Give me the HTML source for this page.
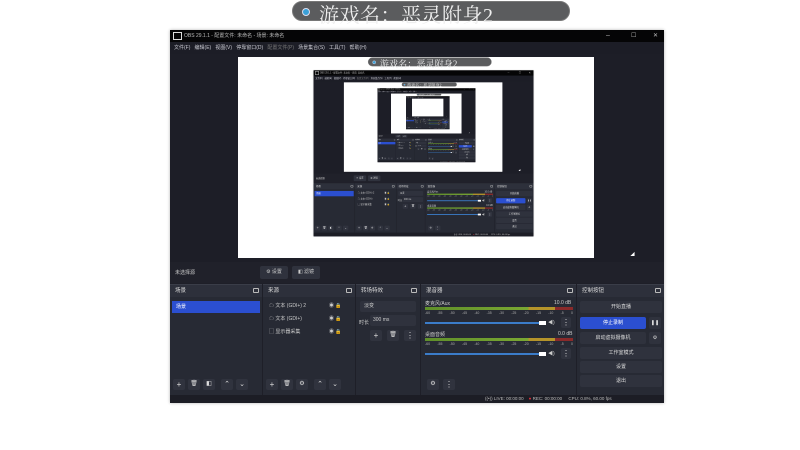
<!DOCTYPE html>
<html><head><meta charset="utf-8">
<style>
*{margin:0;padding:0;box-sizing:border-box}
html,body{width:800px;height:450px;overflow:hidden;background:#fff}
.root{position:absolute;left:0;top:0;width:800px;height:450px;background:#fff;overflow:hidden;font-family:"Liberation Sans","Noto Sans CJK SC",sans-serif}
.a{position:absolute}
.pill{left:292px;top:1px;width:278px;height:20px;border-radius:10px;background:#5b5c5e;border:1px solid #777}
.pill .t{left:26px;top:-3px;font-family:"Liberation Serif","Noto Serif CJK SC",serif;font-size:20px;color:#eee;white-space:nowrap;letter-spacing:0.5px}
.pill .dot{left:9px;top:6px;width:8px;height:8px;border-radius:50%;background:#3aa0d8;border:1px solid #dde}
.win{left:170px;top:30px;width:494px;height:373px;background:#1e1f28;box-shadow:0 0 3px rgba(0,0,0,.3)}
.tb{left:0;top:0;width:494px;height:12px;background:#050506;color:#bbb;font-size:5px;line-height:12px}
.mb{left:0;top:12px;width:494px;height:12px;background:#1c1d26;color:#c8c8d0;font-size:5px;line-height:12px;white-space:nowrap}
.pv{left:0;top:24px;width:494px;height:208px;background:#1d1e27}
.canvas{left:68px;top:3px;width:356px;height:201px;background:#fff;overflow:hidden}
.stb{left:0;top:232px;width:494px;height:21px;background:#20212a;color:#ccc;font-size:5px}
.btn{background:#2f323d;border-radius:2px;color:#ccc;font-size:5px;text-align:center}
.dock{top:254px;height:111px;background:#272a34;border-top:1px solid #3a3d48}
.dh{left:0;top:0;right:0;height:12px;background:#2d303b;color:#ddd;font-size:5.5px;line-height:12px;padding-left:5px}
.dh i{position:absolute;right:3px;top:3px;width:6px;height:5px;border:1px solid #bbb;border-radius:1px}
.st{left:0;top:365px;width:494px;height:8px;background:#1c1d25;color:#bbb;font-size:4.5px;line-height:8px}
.ib{width:12px;height:11px;border-radius:2px;background:#30333e;color:#ddd;font-size:8px;line-height:11px;text-align:center}
.meter{height:3px;background:linear-gradient(90deg,#5f8f2a 0,#7aa832 70%,#b5942a 70%,#b5942a 88%,#8a2a2a 88%)}
.vol{height:2px;background:#3b7cc9}
.cb{left:3px;width:82px;height:12px;background:#2f323d;border-radius:2px;color:#ddd;font-size:5px;line-height:12px;text-align:center}
.lbl{color:#ccc;font-size:5px;white-space:nowrap}
.ticks{width:148px;overflow:hidden;display:flex;justify-content:space-between;font-size:3.5px;color:#aaa}
</style></head><body>
<div class="root" id="r0">
  <div class="a pill"><div class="a dot"></div><div class="a t">游戏名：恶灵附身2</div></div>
  <div class="a win">
    <div class="a tb"><span style="position:absolute;left:3px;top:2px;width:9px;height:8px;border:1px solid #ddd"></span><span style="position:absolute;left:14px">OBS 29.1.1 - 配置文件: 未命名 - 场景: 未命名</span><span style="position:absolute;left:436px;font-size:7px">–</span><span style="position:absolute;left:461px;font-size:6px">☐</span><span style="position:absolute;left:483px;font-size:6px">✕</span></div>
    <div class="a mb"><span style="margin-left:4px">文件(F)&nbsp;&nbsp; 编辑(E)&nbsp;&nbsp; 视图(V)&nbsp;&nbsp; 停靠窗口(D)&nbsp;&nbsp; <span style="color:#777">配置文件(P)</span>&nbsp;&nbsp; 场景集合(S)&nbsp;&nbsp; 工具(T)&nbsp;&nbsp; 帮助(H)</span></div>
    <div class="a pv">
      <div class="a canvas"></div>
      <div class="a" style="left:462px;top:198px;width:0;height:0;border-left:3px solid #fff;border-bottom:3px solid transparent;border-top:3px solid transparent;transform:rotate(45deg)"></div>
    </div>
    <div class="a stb">
      <span class="a lbl" style="left:5px;top:7px">未选择源</span>
      <div class="a btn" style="left:90px;top:4px;width:28px;height:13px;line-height:13px">⚙ 设置</div>
      <div class="a btn" style="left:122px;top:4px;width:28px;height:13px;line-height:13px">◧ 滤镜</div>
    </div>
    <div class="a dock" style="left:0;width:92px">
      <div class="a dh">场景<i></i></div>
      <div class="a" style="left:2px;top:16px;width:88px;height:12px;background:#2b4fd0;color:#fff;font-size:5px;line-height:12px;padding-left:4px">场景</div>
      <div class="a ib" style="left:3px;top:94px">+</div><div class="a ib" style="left:18px;top:94px;font-size:6px">🗑</div><div class="a ib" style="left:33px;top:94px;font-size:6px">◧</div><div class="a ib" style="left:51px;top:94px;font-size:7px">⌃</div><div class="a ib" style="left:66px;top:94px;font-size:7px">⌄</div>
    </div>
    <div class="a dock" style="left:93px;width:92px">
      <div class="a dh">来源<i></i></div>
      <div class="a lbl" style="left:6px;top:17px">☁ 文本 (GDI+) 2</div>
      <div class="a lbl" style="left:6px;top:30px">☁ 文本 (GDI+)</div>
      <div class="a lbl" style="left:6px;top:43px">▢ 显示器采集</div>
      <div class="a lbl" style="left:66px;top:17px">◉ 🔒</div><div class="a lbl" style="left:66px;top:30px">◉ 🔒</div><div class="a lbl" style="left:66px;top:43px">◉ 🔒</div>
      <div class="a ib" style="left:3px;top:94px">+</div><div class="a ib" style="left:18px;top:94px;font-size:6px">🗑</div><div class="a ib" style="left:33px;top:94px;font-size:6px">⚙</div><div class="a ib" style="left:51px;top:94px;font-size:7px">⌃</div><div class="a ib" style="left:66px;top:94px;font-size:7px">⌄</div>
    </div>
    <div class="a dock" style="left:186px;width:64px">
      <div class="a dh">转场特效<i></i></div>
      <div class="a btn" style="left:4px;top:16px;width:56px;height:11px;line-height:11px;text-align:left;padding-left:4px">淡变</div>
      <span class="a lbl" style="left:3px;top:34px">时长</span>
      <div class="a btn" style="left:14px;top:30px;width:46px;height:11px;line-height:11px;text-align:left;padding-left:3px">300 ms</div>
      <div class="a ib" style="left:14px;top:45px">+</div><div class="a ib" style="left:31px;top:45px;font-size:6px">🗑</div><div class="a ib" style="left:48px;top:45px">⋮</div>
    </div>
    <div class="a dock" style="left:251px;width:155px">
      <div class="a dh">混音器<i></i></div>
      <span class="a lbl" style="left:4px;top:15px">麦克风/Aux</span><span class="a lbl" style="left:133px;top:15px">10.0 dB</span>
      <div class="a meter" style="left:4px;top:22px;width:148px"></div>
      <div class="a ticks" style="left:4px;top:26px"><span>-60</span><span>-55</span><span>-50</span><span>-45</span><span>-40</span><span>-35</span><span>-30</span><span>-25</span><span>-20</span><span>-15</span><span>-10</span><span>-5</span><span>0</span></div>
      <div class="a vol" style="left:4px;top:37px;width:116px"></div><div class="a" style="left:118px;top:36px;width:7px;height:4px;background:#fff"></div><span class="a lbl" style="left:127px;top:34px">◀)</span>
      <div class="a ib" style="left:140px;top:32px;width:10px">⋮</div>
      <span class="a lbl" style="left:4px;top:46px">桌面音频</span><span class="a lbl" style="left:137px;top:46px">0.0 dB</span>
      <div class="a meter" style="left:4px;top:53px;width:148px"></div>
      <div class="a ticks" style="left:4px;top:57px"><span>-60</span><span>-55</span><span>-50</span><span>-45</span><span>-40</span><span>-35</span><span>-30</span><span>-25</span><span>-20</span><span>-15</span><span>-10</span><span>-5</span><span>0</span></div>
      <div class="a vol" style="left:4px;top:68px;width:116px"></div><div class="a" style="left:118px;top:67px;width:7px;height:4px;background:#fff"></div><span class="a lbl" style="left:127px;top:65px">◀)</span>
      <div class="a ib" style="left:140px;top:63px;width:10px">⋮</div>
      <div class="a ib" style="left:6px;top:94px;font-size:6px">⚙</div><div class="a ib" style="left:22px;top:94px">⋮</div>
    </div>
    <div class="a dock" style="left:407px;width:87px">
      <div class="a dh">控制按钮<i></i></div>
      <div class="a cb" style="top:16px">开始直播</div>
      <div class="a cb" style="top:32px;width:66px;background:#2b4fd0;color:#fff">停止录制</div><div class="a cb" style="top:32px;left:72px;width:12px">❚❚</div>
      <div class="a cb" style="top:47px;width:66px">启动虚拟摄像机</div><div class="a cb" style="top:47px;left:72px;width:12px">⚙</div>
      <div class="a cb" style="top:62px">工作室模式</div>
      <div class="a cb" style="top:76px">设置</div>
      <div class="a cb" style="top:90px">退出</div>
    </div>
    <div class="a st"><span style="position:absolute;left:315px">((•)) LIVE: 00:00:00&nbsp;&nbsp;&nbsp; <span style="color:#e0303a">●</span> REC: 00:00:00&nbsp;&nbsp;&nbsp;&nbsp; CPU: 0.8%, 60.00 fps</span></div>
  </div>
</div>
<script>
(function(){
  var root=document.getElementById('r0');
  var tpl=root.cloneNode(true);
  function nest(host,depth){
    if(depth<=0)return;
    var c=host.querySelector('.canvas');
    var cl=tpl.cloneNode(true);cl.removeAttribute('id');
    cl.style.transform='scale(0.445)';cl.style.transformOrigin='0 0';
    c.appendChild(cl);
    nest(cl,depth-1);
  }
  nest(root,3);
})();
</script>
</body></html>
